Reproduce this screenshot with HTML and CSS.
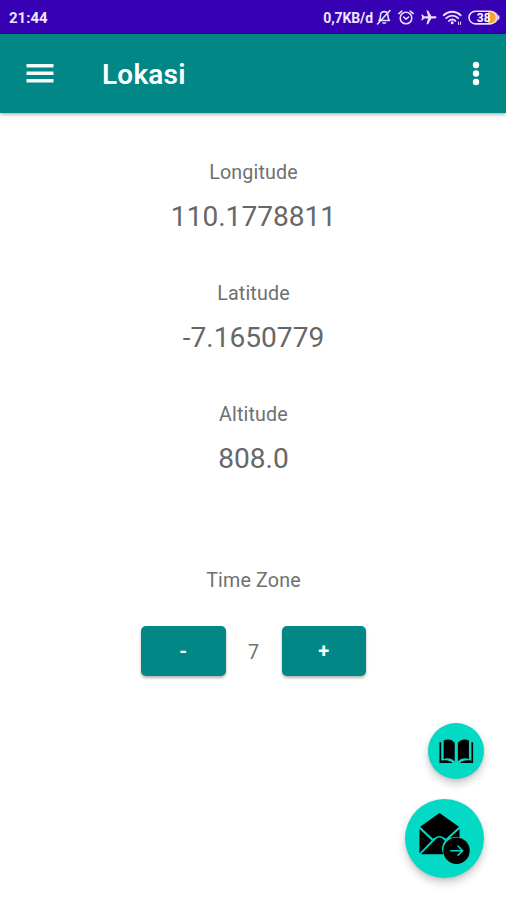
FILE: index.html
```html
<!DOCTYPE html>
<html lang="id">
<head>
<meta charset="utf-8">
<title>Lokasi</title>
<link rel="stylesheet" href="styles.css">
</head>
<body>
<div class="screen">
  <div class="status">
    <span class="clock">21:44</span>
    <span class="speed">0,7KB/d</span>
    <svg class="status-icons" width="124" height="20" viewBox="376 7 124 20" fill="none" stroke="#e6deff" stroke-width="1.6" stroke-linecap="round" stroke-linejoin="round">
      <path d="M379 20.500c1.500-1.500 1.500-3 1.500-5 0-2.300 1.500-3.900 3.700-3.900s3.700 1.600 3.700 3.900c0 2 0 3.500 1.500 5zM383 23h2.500M390 10.500L377.500 24"/>
      <circle cx="406" cy="18" r="5.800"/>
      <path d="M398.800 13.600l3-2.500M413.200 13.600l-3-2.500M403.600 17l2.400 2.200 2.600-2.200"/>
      <path fill="#e6deff" stroke="none" d="M436.500 17.300c0 .8-.6 1.100-1.500 1.100h-3.600l-3.300 5.800h-1.600l1.500-5.800h-3.900l-1.500 1.800h-1.300l.8-2.900-.8-2.900h1.300l1.500 1.800h3.900l-1.500-5.800h1.600l3.300 5.800h3.600c.9 0 1.500.3 1.500 1.100z"/>
      <path d="M443.700 15.200c5-4.600 12-4.600 17 0M446.200 18.100c3.600-3.200 8.400-3.200 12 0M449 20.900c2-1.700 4.400-1.700 6.400 0" stroke-width="1.900"/>
      <circle cx="452.200" cy="22.800" r="1.500" fill="#e6deff" stroke="none"/>
      <path d="M458.500 22v2.500M460.600 22v2.500" stroke-width="1"/>
      <path d="M488 11.500h4.500a6 6 0 0 1 0 12H488z" fill="#f5a32b" stroke="none"/>
      <rect x="469" y="11.300" width="27.500" height="12.600" rx="6.300"/>
      <path d="M498.600 16v3"/>
      <text x="483.700" y="22" class="battery">38</text>
    </svg>
  </div>
  <header class="bar">
    <svg class="menu" width="28" height="20" viewBox="0 0 28 20" fill="#f4fbfb"><path d="M.5 0h27v3.600H.5zM.5 7.500h27v3.600H.5zM.5 15h27v3.600H.5z"/></svg>
    <h1>Lokasi</h1>
    <svg class="more" width="8" height="26" viewBox="0 0 8 26" fill="#fff"><circle cx="4" cy="4" r="3.200"/><circle cx="4" cy="12.500" r="3.200"/><circle cx="4" cy="21" r="3.200"/></svg>
  </header>
  <main>
    <section class="reading"><p class="label">Longitude</p><p class="value">110.1778811</p></section>
    <section class="reading"><p class="label">Latitude</p><p class="value">-7.1650779</p></section>
    <section class="reading"><p class="label">Altitude</p><p class="value">808.0</p></section>
    <section class="zone">
      <p class="label">Time Zone</p>
      <div class="stepper"><button>-</button><span class="label">7</span><button>+</button></div>
    </section>
  </main>
  <div class="fabs">
    <div class="fab small">
      <svg width="56" height="56" viewBox="0 0 56 56">
        <path d="M15.700 17.500c4-2 8.500-.8 11 2.300v18.700c-2.500-3-7-4-11-2.600zM40.900 17.500c-4-2-8.500-.8-11 2.300v18.700c2.500-3 7-4 11-2.600z"/>
        <path d="M11.500 19.300h1.700v18.500c4.200-1 8.800-.5 11.500 2.300H11.500zM45.100 19.300h-1.700v18.500c-4.200-1-8.800-.5-11.500 2.300h13.200z"/>
      </svg>
    </div>
    <div class="fab">
      <svg width="79" height="79" viewBox="0 0 79 79">
        <path d="M34.500 14L15.200 27.800 28 39.800l4-2.200q2.500-1.200 5 0l4 2.200 12.900-12z"/>
        <path d="M14.500 30v24.200L26.700 41.400zM54.500 30v8.200q-4-1-8.300.7l-.8-.7zM15.800 55.300L31.500 39.500q3-2 6 0l2.300 2.300q-5 7-1.300 13.500z"/>
        <circle cx="51.500" cy="51.700" r="13.200"/>
        <path class="arrow" d="M45.300 51.700h12.200M52.700 46.800l4.900 4.900-4.900 4.900"/>
      </svg>
    </div>
  </div>
</div>
</body>
</html>
```

FILE: styles.css
```css
* { box-sizing: border-box; }
body { margin: 0; font-family: Roboto, "Liberation Sans", sans-serif; }
h1, p { margin: 0; font-weight: 400; }
.screen {
  position: relative;
  display: flex;
  flex-direction: column;
  height: 900px;
  background: #fff;
  overflow: hidden;
}
.status {
  display: flex;
  align-items: center;
  height: 34px;
  padding: 1px 6px 0 9px;
  background: #3700b3;
  color: #ece6ff;
}
.status-icons { margin-top: -1px; }
.clock { flex: 1; font-size: 15px; font-weight: 700; }
.speed { font-size: 14px; font-weight: 700; letter-spacing: -.1px; margin-right: 3px; }
.battery { font: 700 12px Roboto, sans-serif; fill: #fff; stroke: none; text-anchor: middle; }
.bar {
  display: flex;
  align-items: center;
  height: 79px;
  padding: 0 26px;
  background: #018786;
  box-shadow: 0 1px 4px rgba(0, 0, 0, .4);
}
.bar h1 {
  flex: 1;
  margin-left: 48px;
  padding-top: 2px;
  font-size: 28px;
  font-weight: 600;
  letter-spacing: .2px;
  line-height: 34px;
  color: #fff;
}
main {
  display: flex;
  flex-direction: column;
  align-items: center;
  padding: 46px 0 0 1px;
  text-align: center;
  color: #676767;
}
.label { font-size: 19.7px; line-height: 27px; letter-spacing: .15px; color: #707070; }
.value { margin-top: 14px; font-size: 28.1px; line-height: 34px; }
.reading { height: 121px; }
.zone { padding-top: 45px; }
.stepper { display: flex; align-items: center; margin-top: 32px; }
.stepper .label { width: 56px; padding-top: 2px; }
.stepper button {
  width: 84.5px;
  height: 50px;
  padding: 0;
  border: 0;
  border-radius: 5px;
  background: #018786;
  color: #fff;
  font: 700 20px/50px Roboto, sans-serif;
  box-shadow: 0 2px 3px rgba(0, 0, 0, .3);
}
.fabs {
  position: absolute;
  right: 22px;
  bottom: 22px;
  display: flex;
  flex-direction: column;
  align-items: flex-end;
  gap: 20px;
}
.fab {
  width: 79px;
  height: 79px;
  border-radius: 50%;
  background: #03dac5;
  box-shadow: 0 5px 9px rgba(0, 0, 0, .2), 0 1px 3px rgba(0, 0, 0, .1);
}
.fab.small { width: 56px; height: 56px; }
.fab svg { display: block; }
.arrow { fill: none; stroke: #03dac5; stroke-width: 1.6; }
```
